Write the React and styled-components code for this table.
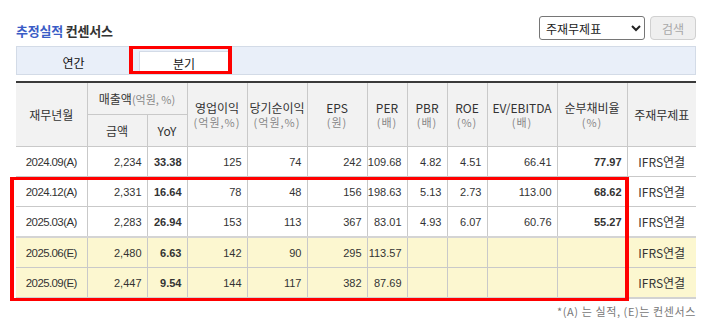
import React from 'react';
import styled, { createGlobalStyle } from 'styled-components';

const GlobalStyle = createGlobalStyle`
  body {
    margin: 0;
    background: #fff;
    font-family: 'Noto Sans CJK KR', 'Noto Sans', sans-serif;
    color: #333;
  }
`;

const Wrap = styled.div`
  width: 680px;
  padding: 16px 10px 0 16px;
`;

const TopBar = styled.div`
  display: flex;
  justify-content: space-between;
  align-items: center;
  height: 24px;
`;

const Title = styled.h3`
  margin: 6px 0 0;
  font-size: 13px;
  font-weight: 700;
  line-height: 18px;
  color: #333;
  letter-spacing: -0.2px;
`;

const Accent = styled.span`
  color: #3a5cc6;
`;

const Controls = styled.div`
  display: flex;
  gap: 5px;
`;

const Select = styled.select`
  width: 106px;
  height: 24px;
  font-family: 'Noto Sans CJK KR', sans-serif;
  font-size: 12px;
  color: #222;
  border: 1px solid #767676;
  border-radius: 3px;
  background: #fff;
  padding: 0 2px;
`;

const SearchButton = styled.button`
  width: 46px;
  height: 24px;
  font-family: 'Noto Sans CJK KR', sans-serif;
  font-size: 12px;
  color: #a8a8a8;
  background: #efefef;
  border: 1px solid #d0d0d0;
  border-radius: 4px;
  padding: 0;
`;

const Tabs = styled.div`
  position: relative;
  margin-top: 6px;
  height: 27px;
  display: flex;
  align-items: flex-end;
  background: #e9eff9;
  border: 1px solid #d3dbe7;
`;

const Tab = styled.div`
  width: ${(p) => p.$w}px;
  margin-left: ${(p) => p.$ml || 0}px;
  height: ${(p) => (p.$active ? 23 : 27)}px;
  display: flex;
  align-items: center;
  justify-content: center;
  padding-top: ${(p) => (p.$active ? 0 : 3)}px;
  font-size: 12px;
  color: #111;
  background: ${(p) => (p.$active ? '#fff' : 'transparent')};
  border: ${(p) => (p.$active ? '1px solid #d3dbe7' : 'none')};
  border-bottom: none;
  box-sizing: border-box;
`;

const Mark = styled.div`
  position: absolute;
  left: ${(p) => p.$l}px;
  top: ${(p) => p.$t}px;
  width: ${(p) => p.$w}px;
  height: ${(p) => p.$h}px;
  border: 3px solid #ff0000;
  border-left-width: 4px;
  border-right-width: 4px;
  box-sizing: border-box;
  pointer-events: none;
`;

const TableWrap = styled.div`
  position: relative;
  margin-top: 6px;
`;

const Table = styled.table`
  width: 680px;
  table-layout: fixed;
  border-collapse: collapse;
  border-top: 2px solid #3a3a3a;
  border-bottom: 2px solid #d2d2d2;
`;

const Th = styled.th`
  background: #f2f2f2;
  border: 1px solid #c9c9c9;
  height: 31px;
  padding: 0;
  font-size: 12px;
  font-weight: 400;
  color: #333;
  line-height: 14px;
  &:first-child { border-left: none; }
  &:last-child { border-right: none; }
`;

const Sub = styled.span`
  display: block;
  font-size: 11px;
  line-height: 14px;
  color: #888;
  letter-spacing: 1px;
`;

const Unit = styled.span`
  font-size: 11px;
  color: #888;
`;

const Tr = styled.tr`
  background: ${(p) => (p.$est ? '#fcf7d0' : '#fff')};
  border-top: ${(p) => (p.$split ? '2px solid #d4d4d4' : 'none')};
`;

const Td = styled.td`
  border: 1px solid #c9c9c9;
  height: 29px;
  padding: 0 5px 0 0;
  font-family: 'Liberation Sans', Arial, sans-serif;
  font-size: 11px;
  text-align: right;
  color: #333;
  font-weight: ${(p) => (p.$bold ? 700 : 400)};
  &:first-child { border-left: none; }
  &:last-child { border-right: none; }
`;

const LabelTd = styled(Td)`
  padding: 0;
  text-align: center;
  font-family: ${(p) => (p.$kr ? "'Noto Sans CJK KR', sans-serif" : "'Liberation Sans', Arial, sans-serif")};
  font-size: ${(p) => (p.$kr ? 12 : 11.5)}px;
  letter-spacing: ${(p) => (p.$kr ? 0 : -0.6)}px;
  color: #333;
`;

const Note = styled.div`
  margin-top: 5px;
  text-align: right;
  font-size: 11px;
  line-height: 14px;
  letter-spacing: 0.6px;
  color: #777;
`;

const rows = [
  ['2024.09(A)', '2,234', '33.38', '125', '74', '242', '109.68', '4.82', '4.51', '66.41', '77.97'],
  ['2024.12(A)', '2,331', '16.64', '78', '48', '156', '198.63', '5.13', '2.73', '113.00', '68.62'],
  ['2025.03(A)', '2,283', '26.94', '153', '113', '367', '83.01', '4.93', '6.07', '60.76', '55.27'],
  ['2025.06(E)', '2,480', '6.63', '142', '90', '295', '113.57', '', '', '', ''],
  ['2025.09(E)', '2,447', '9.54', '144', '117', '382', '87.69', '', '', '', ''],
];

const widths = [71, 60, 40, 60, 60, 60, 40, 40, 40, 70, 70, 69];
const boldCols = [2, 10];

const App = () => {
  return (
    <Wrap>
      <GlobalStyle />
      <TopBar>
        <Title>
          <Accent>추정실적</Accent> 컨센서스
        </Title>
        <Controls>
          <Select defaultValue="main">
            <option value="main">주재무제표</option>
          </Select>
          <SearchButton disabled>검색</SearchButton>
        </Controls>
      </TopBar>

      <Tabs>
        <Tab $w={113}>연간</Tab>
        <Tab $w={90} $ml={9} $active>
          분기
        </Tab>
        <Mark $l={112} $t={-1} $w={103} $h={28} />
      </Tabs>

      <TableWrap>
        <Table>
          <colgroup>
            {widths.map((w, i) => (
              <col key={i} style={{ width: w }} />
            ))}
          </colgroup>
          <thead>
            <tr>
              <Th rowSpan={2}>재무년월</Th>
              <Th colSpan={2}>
                매출액<Unit>(억원, %)</Unit>
              </Th>
              <Th rowSpan={2}>
                영업이익<Sub>(억원,%)</Sub>
              </Th>
              <Th rowSpan={2}>
                당기순이익<Sub>(억원,%)</Sub>
              </Th>
              <Th rowSpan={2}>
                EPS<Sub>(원)</Sub>
              </Th>
              <Th rowSpan={2}>
                PER<Sub>(배)</Sub>
              </Th>
              <Th rowSpan={2}>
                PBR<Sub>(배)</Sub>
              </Th>
              <Th rowSpan={2}>
                ROE<Sub>(%)</Sub>
              </Th>
              <Th rowSpan={2}>
                EV/EBITDA<Sub>(배)</Sub>
              </Th>
              <Th rowSpan={2}>
                순부채비율<Sub>(%)</Sub>
              </Th>
              <Th rowSpan={2}>주재무제표</Th>
            </tr>
            <tr>
              <Th>금액</Th>
              <Th>YoY</Th>
            </tr>
          </thead>
          <tbody>
            {rows.map((r, i) => (
              <Tr key={r[0]} $est={r[0].includes('(E)')} $split={i === 3}>
                <LabelTd>{r[0]}</LabelTd>
                {r.slice(1).map((v, j) => (
                  <Td key={j} $bold={boldCols.includes(j + 1)}>
                    {v}
                  </Td>
                ))}
                <LabelTd $kr>IFRS연결</LabelTd>
              </Tr>
            ))}
          </tbody>
        </Table>
        <Mark $l={-6} $t={96} $w={619} $h={124} />
      </TableWrap>

      <Note>*(A) 는 실적, (E)는 컨센서스</Note>
    </Wrap>
  );
};

export default App;
